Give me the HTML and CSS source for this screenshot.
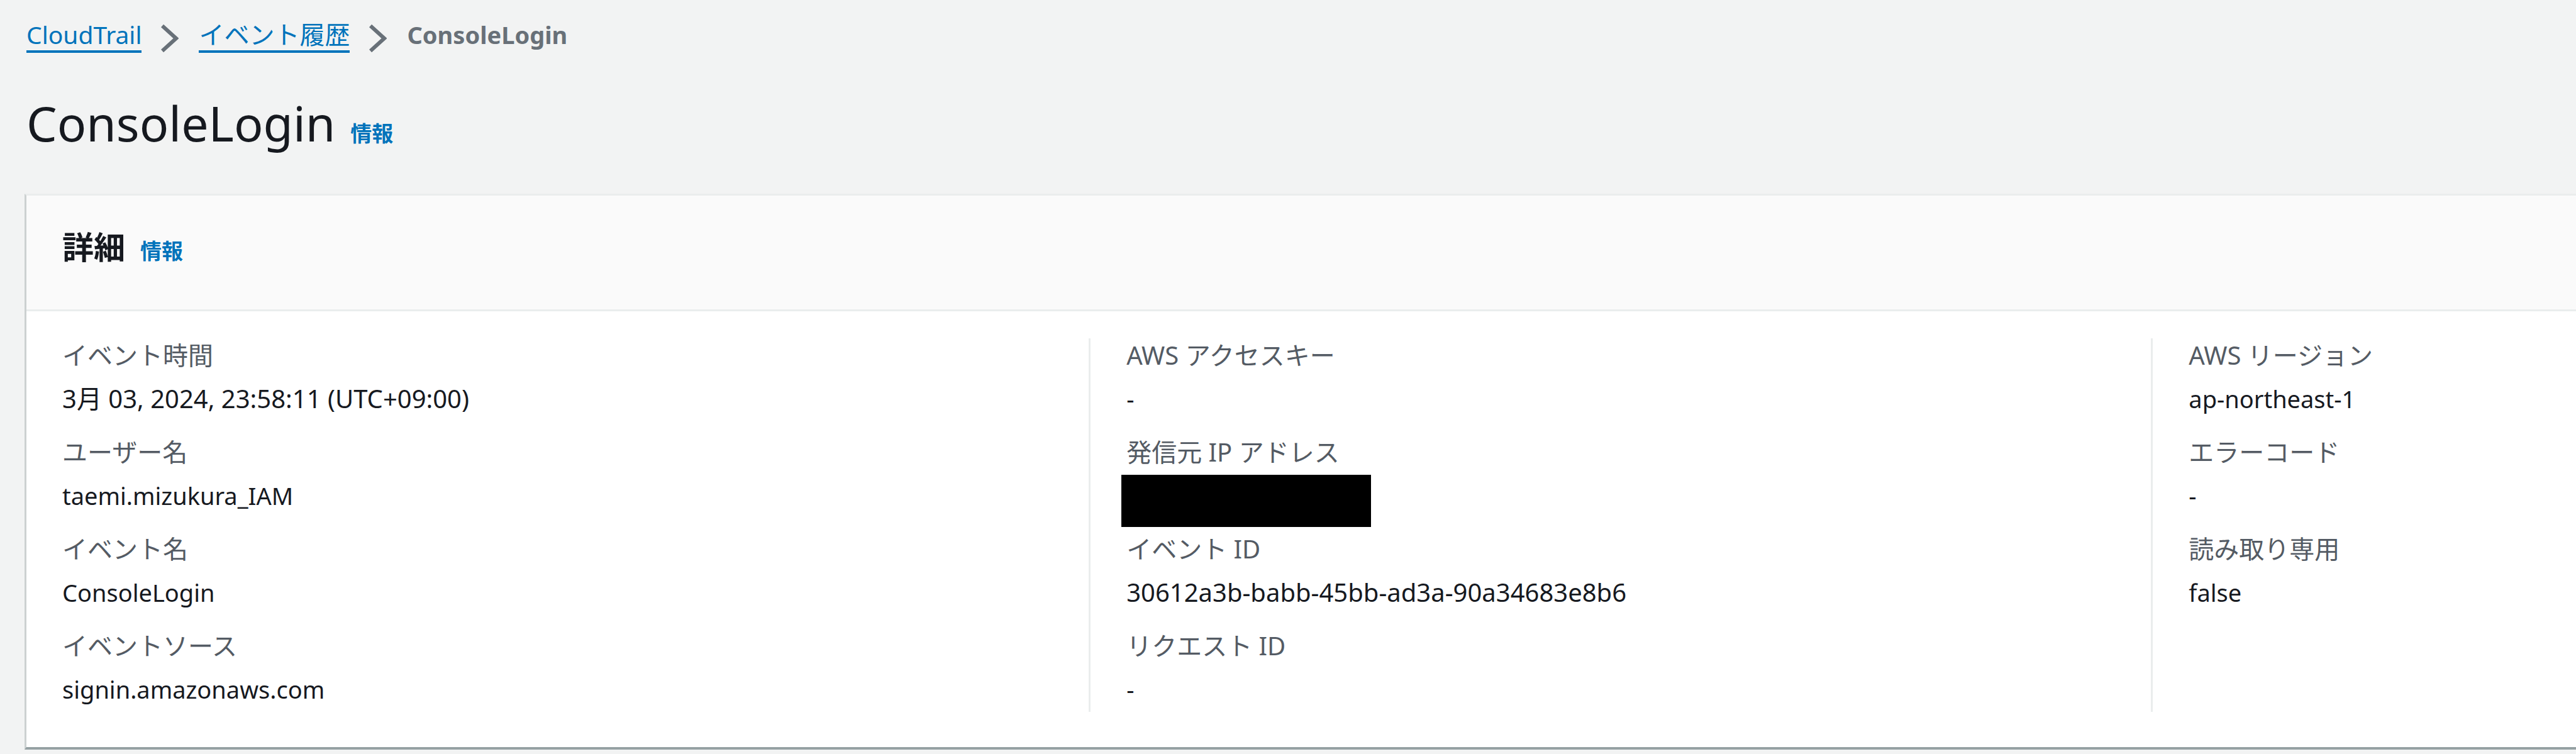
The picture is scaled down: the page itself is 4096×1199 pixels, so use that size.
FILE: index.html
```html
<!DOCTYPE html>
<html lang="ja">
<head>
<meta charset="utf-8">
<title>ConsoleLogin - CloudTrail</title>
<link rel="stylesheet" href="styles.css">
</head>
<body>
<nav class="breadcrumb" aria-label="パンくずリスト">
  <ol class="breadcrumb-list">
    <li><a class="breadcrumb-link" href="#">CloudTrail</a></li>
    <li class="chevron" aria-hidden="true"><svg viewBox="0 0 28 44"><path d="M2 2 L24 22 L2 42"/></svg></li>
    <li><a class="breadcrumb-link breadcrumb-link-ja" href="#">イベント履歴</a></li>
    <li class="chevron" aria-hidden="true"><svg viewBox="0 0 28 44"><path d="M2 2 L24 22 L2 42"/></svg></li>
    <li class="breadcrumb-current" aria-current="page">ConsoleLogin</li>
  </ol>
</nav>
<main>
  <header class="page-header">
    <h1 class="page-title">ConsoleLogin</h1>
    <a class="info-link" href="#">情報</a>
  </header>
  <section class="card">
    <header class="card-header">
      <h2 class="card-title">詳細</h2>
      <a class="info-link" href="#">情報</a>
    </header>
    <div class="columns">
      <dl class="column">
        <div class="pair"><dt>イベント時間</dt><dd class="numeric">3月 03, 2024, 23:58:11 (UTC+09:00)</dd></div>
        <div class="pair"><dt>ユーザー名</dt><dd>taemi.mizukura_IAM</dd></div>
        <div class="pair"><dt>イベント名</dt><dd>ConsoleLogin</dd></div>
        <div class="pair"><dt>イベントソース</dt><dd>signin.amazonaws.com</dd></div>
      </dl>
      <dl class="column">
        <div class="pair"><dt>AWS アクセスキー</dt><dd>-</dd></div>
        <div class="pair"><dt>発信元 IP アドレス</dt><dd class="redacted"></dd></div>
        <div class="pair"><dt>イベント ID</dt><dd class="numeric">30612a3b-babb-45bb-ad3a-90a34683e8b6</dd></div>
        <div class="pair"><dt>リクエスト ID</dt><dd>-</dd></div>
      </dl>
      <dl class="column">
        <div class="pair"><dt>AWS リージョン</dt><dd>ap-northeast-1</dd></div>
        <div class="pair"><dt>エラーコード</dt><dd>-</dd></div>
        <div class="pair"><dt>読み取り専用</dt><dd>false</dd></div>
      </dl>
    </div>
  </section>
</main>
</body>
</html>
```
FILE: styles.css
```css
* {
  box-sizing: border-box;
}

body {
  margin: 0;
  padding: 30px 0 6px 39px;
  background: #f2f3f3;
  color: #16191f;
  font: 38px/54px "Noto Sans", "Noto Sans CJK JP", sans-serif;
}

h1,
h2,
dl,
dd,
ol {
  margin: 0;
  padding: 0;
}

a {
  color: #0073bb;
  text-decoration: none;
}

.breadcrumb-list {
  display: flex;
  padding-left: 3px;
  list-style: none;
  line-height: 50px;
}

.breadcrumb-link {
  display: block;
  border-bottom: 4px solid #0073bb;
  font-size: 39px;
}

.breadcrumb-link-ja {
  font-size: 40px;
}

.breadcrumb-current {
  color: #687078;
  font-weight: 700;
}

.chevron {
  width: 28px;
  height: 44px;
  margin: 9px 32px 0 31px;
}

.chevron svg {
  display: block;
  width: 28px;
  height: 44px;
  fill: none;
  stroke: #687078;
  stroke-width: 6;
}

.page-header {
  display: flex;
  align-items: baseline;
  gap: 24px;
  margin: 64px 0 64px;
  padding-left: 3px;
}

.page-title {
  font-size: 77px;
  font-weight: 400;
  line-height: 96px;
}

.info-link {
  font-size: 34px;
  font-weight: 700;
}

.card {
  background: #fff;
  border-top: 3px solid #eaeded;
  border-left: 3px solid #ccd1d1;
  border-bottom: 4px solid #95a1a3;
}

.card-header {
  display: flex;
  align-items: baseline;
  gap: 24px;
  padding: 52px 57px 66px;
  background: #fafafa;
  border-bottom: 3px solid #eaeded;
}

.card-title {
  font-size: 50px;
  font-weight: 700;
  line-height: 60px;
}

.columns {
  display: grid;
  grid-template-columns: 5fr 5fr 2fr;
  padding: 43px 0 56px;
}

.column {
  display: flex;
  flex-direction: column;
  gap: 31px;
  padding: 0 0 9px 57px;
}

.column + .column {
  border-left: 3px solid #eaeded;
}

.pair {
  display: grid;
  gap: 15px;
}

dt {
  color: #545b64;
  font-size: 40px;
}

.numeric {
  font-size: 40px;
}

.redacted {
  position: relative;
  height: 54px;
}

.redacted::before {
  content: "";
  position: absolute;
  top: -6px;
  left: -8px;
  width: 397px;
  height: 83px;
  background: #000;
}
```
